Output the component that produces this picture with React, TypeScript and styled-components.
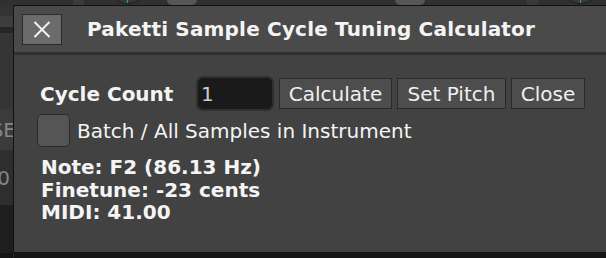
import styled, { createGlobalStyle } from "styled-components";

const Global = createGlobalStyle`
  html, body { margin: 0; padding: 0; background: #2b2b2b; }
  body { font-family: "DejaVu Sans", "Liberation Sans", sans-serif; }
`;

const Screen = styled.div`
  position: relative;
  width: 606px;
  height: 258px;
  overflow: hidden;
  background: #151515;
`;

// app behind the dialog
const TopStrip = styled.div`
  display: flex;
  height: 5px;
  overflow: hidden;
  background: #303030;
`;

const DarkColumn = styled.div<{ $left: number }>`
  flex: 0 0 11px;
  margin-left: ${p => p.$left}px;
  background: #3a3a3a;
`;

const KnobTop = styled.div<{ $left: number }>`
  position: relative;
  flex: 0 0 41px;
  height: 41px;
  margin-top: -37px;
  margin-left: ${p => p.$left}px;
  border-radius: 50%;
  border: 1px solid #1f1f1f;
  box-sizing: border-box;
  background: #383838;
  &::after {
    content: "";
    position: absolute;
    left: 19px;
    bottom: 0;
    width: 1px;
    height: 8px;
    background: #1fb07a;
  }
`;

const Pill = styled.div<{ $left: number }>`
  flex: 0 0 30px;
  margin-left: ${p => p.$left}px;
  background: #565656;
  border-radius: 0 0 6px 6px;
`;

const LeftStrip = styled.div`
  display: flex;
  flex-direction: column;
  width: 13px;
  height: 253px;
  overflow: hidden;
  border-right: 1px solid #262626;
`;

const StripCell = styled.div<{ $h: number; $bg: string }>`
  flex: 0 0 ${p => p.$h}px;
  background: ${p => p.$bg};
  display: flex;
  align-items: center;
  justify-content: flex-end;
  font-size: 20px;
  color: #858585;
  white-space: nowrap;
  overflow: hidden;
`;

const StripText = styled.span<{ $shift: number }>`
  flex-shrink: 0;
  margin-right: ${p => p.$shift}px;
`;

// dialog
const Dialog = styled.div`
  position: absolute;
  left: 13px;
  top: 5px;
  width: 610px;
  height: 248px;
  box-sizing: border-box;
  border: 1px solid #111;
  background: #424242;
  display: flex;
  flex-direction: column;
`;

const TitleBar = styled.div`
  display: flex;
  align-items: center;
  height: 46px;
  padding-left: 8px;
  background: #4a4a4a;
  border-bottom: 3px solid #2e2e2e;
`;

const CloseX = styled.div`
  width: 40px;
  height: 31px;
  box-sizing: border-box;
  border: 1px solid #2b2b2b;
  background: #6b6b6b;
  display: flex;
  align-items: center;
  justify-content: center;
  margin-top: 1px;
`;

const Title = styled.div`
  margin-left: 25px;
  font-size: 20px;
  font-weight: bold;
  letter-spacing: 0.18px;
  color: #f4f4f4;
`;

const Body = styled.div`
  padding: 21px 0 0 23px;
  display: flex;
  flex-direction: column;
`;

const Row = styled.div`
  display: flex;
  align-items: center;
  height: 35px;
  gap: 5px;
`;

const FieldLabel = styled.div`
  width: 151px;
  margin-left: 3px;
  font-size: 20px;
  font-weight: bold;
  color: #f4f4f4;
`;

const Input = styled.div`
  width: 78px;
  height: 35px;
  box-sizing: border-box;
  border: 2px solid #2f2f2f;
  border-radius: 7px;
  background: #1a1a1a;
  padding-left: 3px;
  display: flex;
  align-items: center;
  font-size: 20px;
  color: #cfcfcf;
`;

const Button = styled.div<{ $w: number }>`
  width: ${p => p.$w}px;
  height: 31px;
  box-sizing: border-box;
  border: 1px solid #2a2a2a;
  background: #4d4d4d;
  display: flex;
  align-items: center;
  justify-content: center;
  font-size: 20px;
  color: #f0f0f0;
`;

const CheckRow = styled.div`
  display: flex;
  align-items: center;
  margin-top: 3px;
  gap: 7px;
`;

const Checkbox = styled.div`
  width: 33px;
  height: 33px;
  box-sizing: border-box;
  border: 1px solid #2a2a2a;
  border-radius: 5px;
  background: #555;
`;

const CheckLabel = styled.div`
  font-size: 20px;
  color: #f4f4f4;
`;

const Info = styled.div`
  margin-top: 9px;
  margin-left: 4px;
  font-size: 20px;
  line-height: 22.5px;
  font-weight: bold;
  color: #f4f4f4;
`;

export default function App() {
  return (
    <Screen>
      <Global />
      <TopStrip>
        <DarkColumn $left={73} />
        <KnobTop $left={23} />
        <Pill $left={19} />
        <Pill $left={198} />
        <DarkColumn $left={102} />
        <KnobTop $left={22} />
      </TopStrip>
      <LeftStrip>
        <StripCell $h={11} $bg="#333" />
        <StripCell $h={11} $bg="#3d3d3d" />
        <StripCell $h={6} $bg="#262626" />
        <StripCell $h={76} $bg="#353535" />
        <StripCell $h={41} $bg="#3b3b3b">
          <StripText $shift={-3}>USE</StripText>
        </StripCell>
        <StripCell $h={55} $bg="#2e2e2e">
          <StripText $shift={3}>0</StripText>
        </StripCell>
        <StripCell $h={48} $bg="#1e1e1e" />
      </LeftStrip>

      <Dialog>
        <TitleBar>
          <CloseX>
            <svg width="18" height="17" viewBox="0 0 18 17">
              <path d="M1.5 1 L16.5 16 M16.5 1 L1.5 16" stroke="#f2f2f2" strokeWidth="2" />
            </svg>
          </CloseX>
          <Title>Paketti Sample Cycle Tuning Calculator</Title>
        </TitleBar>
        <Body>
          <Row>
            <FieldLabel>Cycle Count</FieldLabel>
            <Input>1</Input>
            <Button $w={113}>Calculate</Button>
            <Button $w={109}>Set Pitch</Button>
            <Button $w={74}>Close</Button>
          </Row>
          <CheckRow>
            <Checkbox />
            <CheckLabel>Batch / All Samples in Instrument</CheckLabel>
          </CheckRow>
          <Info>
            <div>Note: F2 (86.13 Hz)</div>
            <div>Finetune: -23 cents</div>
            <div>MIDI: 41.00</div>
          </Info>
        </Body>
      </Dialog>
    </Screen>
  );
}
